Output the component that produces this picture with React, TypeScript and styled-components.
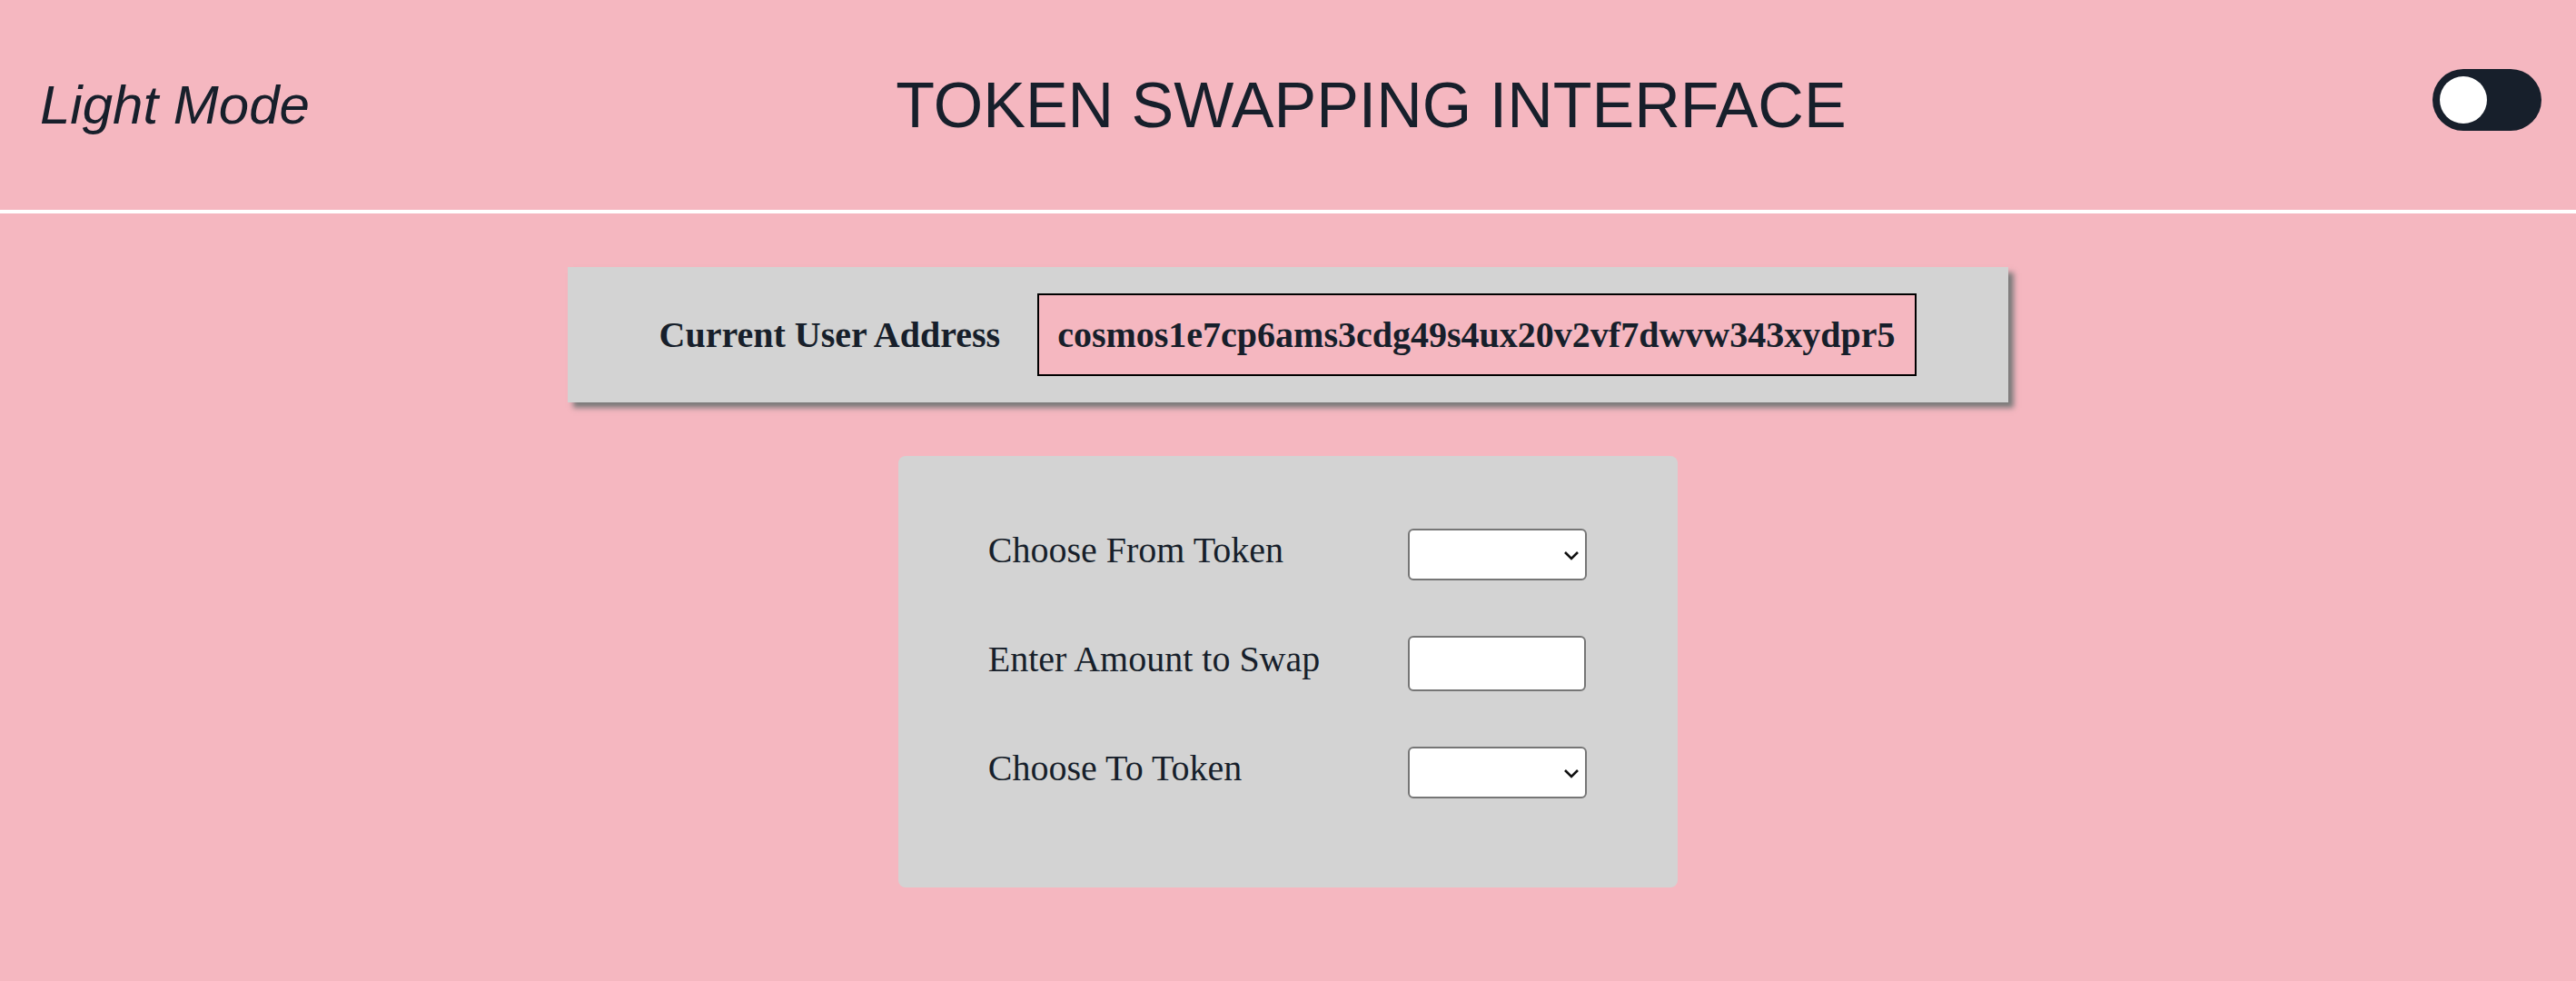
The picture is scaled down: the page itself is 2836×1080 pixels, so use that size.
import React, { useState } from 'react';
import styled, { createGlobalStyle } from 'styled-components';

const GlobalStyle = createGlobalStyle`
  html, body {
    margin: 0;
    padding: 0;
    background: #f5b7c0;
  }
  body {
    font-family: "Liberation Serif", "Times New Roman", serif;
    color: #171f2b;
  }
  * {
    box-sizing: border-box;
  }
`;

const Header = styled.header`
  display: flex;
  justify-content: space-between;
  align-items: center;
  height: 235px;
  padding: 0 38px 0 44px;
  border-bottom: 4px solid #ffffff;
  font-family: "Liberation Sans", Arial, sans-serif;
`;

const ModeLabel = styled.div`
  font-size: 60px;
  font-style: italic;
`;

const Title = styled.h1`
  margin: 0;
  font-size: 70px;
  font-weight: 400;
`;

const Toggle = styled.button<{ $on: boolean }>`
  display: flex;
  justify-content: ${(p) => (p.$on ? 'flex-end' : 'flex-start')};
  align-items: center;
  width: 120px;
  height: 68px;
  margin-bottom: 11px;
  padding: 8px;
  border: none;
  border-radius: 34px;
  background: #171f2b;
  cursor: pointer;
`;

const Knob = styled.span`
  display: block;
  width: 52px;
  height: 52px;
  border-radius: 50%;
  background: #ffffff;
`;

const Main = styled.main`
  display: flex;
  flex-direction: column;
  align-items: center;
  padding-top: 59px;
`;

const AddressCard = styled.section`
  display: flex;
  align-items: center;
  gap: 41px;
  padding: 29px 101px;
  background: #d3d3d3;
  box-shadow: 6px 6px 6px #7a7a7a;
  font-size: 40px;
  font-weight: 700;
`;

const AddressBox = styled.div`
  padding: 20px 22px 20px 20px;
  border: 2px solid #000000;
  background: #f5b7c0;
`;

const SwapCard = styled.form`
  display: grid;
  grid-template-columns: auto 197px;
  column-gap: 97px;
  row-gap: 61px;
  align-items: center;
  margin-top: 59px;
  padding: 80px 100px 98px 99px;
  background: #d3d3d3;
  border-radius: 8px;
`;

const FieldLabel = styled.label`
  margin-bottom: 10px;
  font-size: 40px;
`;

const SelectWrap = styled.div`
  position: relative;
  width: 197px;
  height: 57px;
`;

const TokenSelect = styled.select`
  appearance: none;
  width: 100%;
  height: 100%;
  border: 2px solid #767676;
  border-radius: 6px;
  background: #ffffff;
  font-size: 26px;
`;

const Chevron = styled.svg`
  position: absolute;
  right: 8px;
  top: 50%;
  width: 18px;
  height: 12px;
  margin-top: -5px;
  pointer-events: none;
`;

const AmountInput = styled.input`
  width: 196px;
  height: 61px;
  border: 2px solid #767676;
  border-radius: 6px;
  background: #ffffff;
  font-size: 26px;
`;

const TokenPicker: React.FC<{ id: string }> = ({ id }) => (
  <SelectWrap>
    <TokenSelect id={id} defaultValue="">
      <option value=""></option>
    </TokenSelect>
    <Chevron viewBox="0 0 18 12">
      <polyline points="2,2 9,9 16,2" fill="none" stroke="#111" strokeWidth="2.6" />
    </Chevron>
  </SelectWrap>
);

export default function App() {
  const [dark, setDark] = useState(false);

  return (
    <>
      <GlobalStyle />
      <Header>
        <ModeLabel>{dark ? 'Dark Mode' : 'Light Mode'}</ModeLabel>
        <Title>TOKEN SWAPPING INTERFACE</Title>
        <Toggle $on={dark} onClick={() => setDark(!dark)} aria-label="toggle mode">
          <Knob />
        </Toggle>
      </Header>
      <Main>
        <AddressCard>
          <span>Current User Address</span>
          <AddressBox>cosmos1e7cp6ams3cdg49s4ux20v2vf7dwvw343xydpr5</AddressBox>
        </AddressCard>
        <SwapCard onSubmit={(e) => e.preventDefault()}>
          <FieldLabel htmlFor="from">Choose From Token</FieldLabel>
          <TokenPicker id="from" />
          <FieldLabel htmlFor="amount">Enter Amount to Swap</FieldLabel>
          <AmountInput id="amount" type="text" />
          <FieldLabel htmlFor="to">Choose To Token</FieldLabel>
          <TokenPicker id="to" />
        </SwapCard>
      </Main>
    </>
  );
}
